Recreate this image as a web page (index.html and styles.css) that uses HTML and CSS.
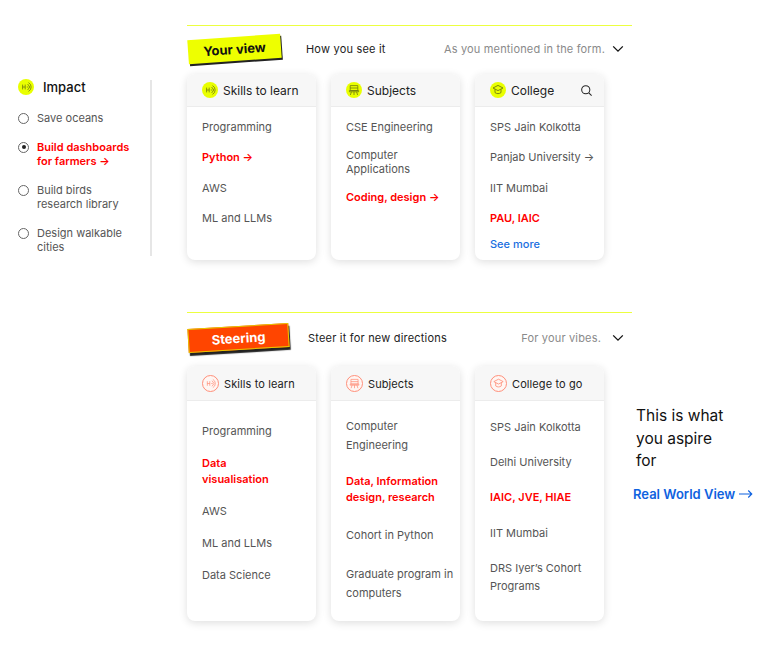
FILE: index.html
```html
<!DOCTYPE html>
<html lang="en">
<head>
<meta charset="utf-8">
<title>Impact</title>
<link rel="stylesheet" href="styles.css">
</head>
<body>
<svg class="defs" width="0" height="0" aria-hidden="true">
  <symbol id="i-skills" viewBox="0 0 16 16">
    <path d="M4.6 5.6v4.8M7.2 5.6v4.8M4.6 8h2.6M8.8 8h1.6M9.6 5l2.2 3-2.2 3" fill="none" stroke="currentColor" stroke-width=".8"/>
    <path d="M10.5 3.6a5 5 0 0 1 0 8.8" fill="none" stroke="currentColor" stroke-width=".8"/>
  </symbol>
  <symbol id="i-subjects" viewBox="0 0 16 16">
    <path d="M4.2 3.6h7.6v5H4.2zM3.4 8.6h9.2v1.2H3.4zM5.4 9.8l-1 3.2M8 9.8V13M10.6 9.8l1 3.2M4.2 6h7.6" fill="none" stroke="currentColor" stroke-width=".8"/>
  </symbol>
  <symbol id="i-college" viewBox="0 0 16 16">
    <path d="M8 3.4l5 2.6-5 2.6L3 6zM5 7.2v3.4c1.8 1.4 4.2 1.4 6 0V7.2" fill="none" stroke="currentColor" stroke-width=".9"/>
  </symbol>
  <symbol id="i-chev" viewBox="0 0 12 8">
    <path d="M1.2 1.4L6 6.2l4.8-4.8" fill="none" stroke="currentColor" stroke-width="1.3"/>
  </symbol>
</svg>

<div class="page">
  <aside class="side">
    <div class="side-head">
      <span class="ico ico-y"><svg><use href="#i-skills"/></svg></span>
      <span>Impact</span>
    </div>
    <ul class="radios">
      <li class="radio"><span class="dot"></span><span>Save oceans</span></li>
      <li class="radio on"><span class="dot"></span><span>Build dashboards for farmers →</span></li>
      <li class="radio"><span class="dot"></span><span>Build birds research library</span></li>
      <li class="radio"><span class="dot"></span><span>Design walkable cities</span></li>
    </ul>
  </aside>

  <main class="main">
    <section class="sec sec-view">
      <div class="sec-row">
        <span class="badge badge-y">Your view</span>
        <span class="sec-title">How you see it</span>
        <span class="sec-note">As you mentioned in the form.</span>
        <svg class="chev"><use href="#i-chev"/></svg>
      </div>
      <div class="cards">
        <article class="card">
          <header class="card-h"><span class="ico ico-y"><svg><use href="#i-skills"/></svg></span>Skills to learn</header>
          <ul class="list">
            <li>Programming</li>
            <li class="hot">Python →</li>
            <li>AWS</li>
            <li>ML and LLMs</li>
          </ul>
        </article>
        <article class="card">
          <header class="card-h"><span class="ico ico-y"><svg><use href="#i-subjects"/></svg></span>Subjects</header>
          <ul class="list list-tight">
            <li>CSE Engineering</li>
            <li>Computer Applications</li>
            <li class="hot">Coding, design →</li>
          </ul>
        </article>
        <article class="card">
          <header class="card-h"><span class="ico ico-y"><svg><use href="#i-college"/></svg></span>College
            <svg class="search" viewBox="0 0 14 14"><circle cx="6.2" cy="6.2" r="4.4"/><path d="M9.5 9.5l3 3"/></svg>
          </header>
          <ul class="list">
            <li>SPS Jain Kolkotta</li>
            <li>Panjab University →</li>
            <li>IIT Mumbai</li>
            <li class="hot">PAU, IAIC</li>
            <li class="more">See more</li>
          </ul>
        </article>
      </div>
    </section>

    <section class="sec sec-steer">
      <div class="sec-row">
        <span class="badge badge-o">Steering</span>
        <span class="sec-title">Steer it for new directions</span>
        <span class="sec-note">For your vibes.</span>
        <svg class="chev"><use href="#i-chev"/></svg>
      </div>
      <div class="cards">
        <article class="card">
          <header class="card-h"><span class="ico ico-o"><svg><use href="#i-skills"/></svg></span>Skills to learn</header>
          <ul class="list l-skills">
            <li>Programming</li>
            <li class="hot">Data visualisation</li>
            <li>AWS</li>
            <li>ML and LLMs</li>
            <li>Data Science</li>
          </ul>
        </article>
        <article class="card">
          <header class="card-h"><span class="ico ico-o"><svg><use href="#i-subjects"/></svg></span>Subjects</header>
          <ul class="list l-subjects">
            <li>Computer Engineering</li>
            <li class="hot">Data, Information design, research</li>
            <li>Cohort in Python</li>
            <li>Graduate program in computers</li>
          </ul>
        </article>
        <article class="card">
          <header class="card-h"><span class="ico ico-o"><svg><use href="#i-college"/></svg></span>College to go</header>
          <ul class="list l-college">
            <li>SPS Jain Kolkotta</li>
            <li>Delhi University</li>
            <li class="hot">IAIC, JVE, HIAE</li>
            <li>IIT Mumbai</li>
            <li>DRS Iyer’s Cohort Programs</li>
          </ul>
        </article>
        <div class="note">
          <p class="note-t">This is what you aspire for</p>
          <a class="note-l" href="#">Real World View
            <svg viewBox="0 0 16 10"><path d="M0 5h14.6M10.6 1l4 4-4 4"/></svg>
          </a>
        </div>
      </div>
    </section>
  </main>
</div>
</body>
</html>
```

FILE: styles.css
```css
* { box-sizing: border-box; }
html, body { margin: 0; padding: 0; background: #fff; }
body { font-family: Inter, "Liberation Sans", sans-serif; color: #4a4a4a; font-size: 11px; overflow: hidden; }
ul { list-style: none; margin: 0; padding: 0; }
.defs { display: block; height: 0; }

.page { display: flex; align-items: flex-start; padding-top: 25px; height: 647px; }

.side { width: 134px; margin: 55px 35px 0 18px; height: 176px; border-right: 2px solid #e6e6e6; padding-right: 12px; flex-shrink: 0; }
.side-head { display: flex; align-items: center; gap: 9px; font-size: 13px; font-weight: 500; color: #111; height: 16px; margin-top: -1px; }
.radios { display: flex; flex-direction: column; gap: 14px; margin-top: 16px; }
.radio { display: flex; gap: 8px; font-size: 11px; line-height: 14.5px; color: #555; }
.dot { width: 11px; height: 11px; border: 1px solid #666; border-radius: 50%; margin-top: 2px; flex-shrink: 0; position: relative; }
.on { color: #ff0000; font-weight: 600; }
.on .dot::after { content: ""; position: absolute; left: 2.5px; top: 2.5px; width: 4px; height: 4px; border-radius: 50%; background: #222; }

.ico { width: 16px; height: 16px; border-radius: 50%; flex-shrink: 0; display: block; }
.ico svg { display: block; width: 16px; height: 16px; }
.ico-y { background: #e9ff00; color: #6f7a10; }
.ico-o { width: 17px; height: 17px; border: 1px solid #ff8f7a; color: #ff8f7a; background: #fff6f3; }
.ico-o svg { width: 15px; height: 15px; }

.main { width: 445px; flex-shrink: 0; }
.sec { border-top: 1px solid #ecff40; }
.sec-view { margin-bottom: 52px; }
.sec-row { display: flex; align-items: center; height: 45px; margin-bottom: 3px; }
.sec-steer .sec-row { height: 50px; }

.badge { display: block; flex-shrink: 0; font-weight: 700; font-size: 13px; text-align: center; }
.badge-y { width: 93px; height: 24px; line-height: 24px; margin-left: 1px; background: #eeff00; color: #111; transform: rotate(-4deg); box-shadow: 1px 2px 0 #222; }
.badge-o { width: 101px; height: 24px; line-height: 22px; margin-left: 1px; background: #ff4500; color: #fff; border: 1px solid #e6c800; transform: rotate(-3.5deg); box-shadow: 1px 3px 1px #222; }
.sec-title { font-size: 11px; color: #222; margin-left: 25px; letter-spacing: .2px; }
.badge-o + .sec-title { margin-left: 19px; }
.sec-note { margin-left: auto; font-size: 11px; color: #8a8a8a; letter-spacing: .17px; }
.chev { width: 12px; height: 8px; margin: 0 8px 0 7px; color: #111; flex-shrink: 0; }
.sec-steer .chev { margin-left: 11px; }

.cards { display: flex; gap: 15px; align-items: stretch; }
.card { width: 129px; flex-shrink: 0; background: #fff; border-radius: 8px; box-shadow: 0 2px 8px rgba(0,0,0,.13); overflow: hidden; }
.card-h { display: flex; align-items: center; gap: 5px; height: 33px; padding-left: 15px; background: #f7f7f7; border-bottom: 1px solid #ececec; color: #222; font-size: 12px; }
.sec-steer .card-h { height: 35px; padding-top: 1px; font-size: 11px; letter-spacing: .1px; gap: 5px; }
.search { width: 13px; height: 13px; margin-left: auto; margin-right: 11px; fill: none; stroke: #222; stroke-width: 1.1; }

.list { display: flex; flex-direction: column; gap: 15.75px; padding: 13px 8px 9px 15px; font-size: 11px; line-height: 14.5px; color: #555; }
.list-tight { gap: 13px; }
.hot { color: #ff0000; font-weight: 600; }
.more { color: #1a6fe0; margin-top: -4.5px; font-weight: 500; }

.l-skills { padding: 22px 30px 8px 15px; gap: 16px; line-height: 16px; }
.l-subjects { padding: 16px 5px 18px 15px; gap: 20px; line-height: 19px; }
.l-subjects .hot { line-height: 16px; margin: -2px 0 1px; }
.l-college { padding-top: 17px; gap: 17.2px; line-height: 18px; }

.note { flex-shrink: 0; width: 125px; margin-left: 14px; padding-top: 39px; }
.note-t { margin: 0 0 13px 3px; font-size: 15.5px; line-height: 22.5px; color: #111; width: 100px; }
.note-l { display: flex; align-items: center; gap: 4px; color: #0f62e0; font-size: 13px; font-weight: 600; text-decoration: none; white-space: nowrap; }
.note-l svg { width: 14px; height: 10px; fill: none; stroke: #0f62e0; stroke-width: 1.3; }
```
